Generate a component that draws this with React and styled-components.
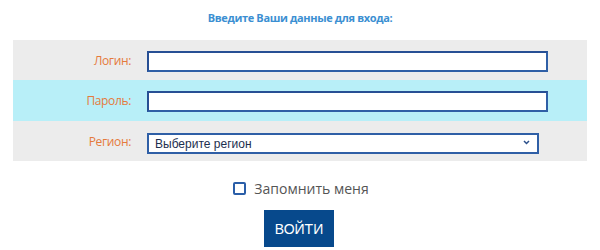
import React from 'react';
import styled, { createGlobalStyle } from 'styled-components';

const Global = createGlobalStyle`
  html, body { margin: 0; padding: 0; background: #fff; }
  body { font-family: "Open Sans", "Noto Sans", sans-serif; }
`;

const Page = styled.div`
  width: 600px;
  height: 250px;
  display: flex;
  flex-direction: column;
  align-items: center;
  overflow: hidden;
`;

const Title = styled.div`
  margin-top: 10px;
  height: 30px;
  font-family: "Open Sans", sans-serif;
  font-weight: bold;
  font-size: 11px;
  color: #3b8fd2;
  letter-spacing: -0.35px;
`;

const Table = styled.div`
  width: 574px;
  display: flex;
  flex-direction: column;
`;

const Row = styled.div`
  display: grid;
  grid-template-columns: 134px 1fr;
  align-items: center;
  height: ${(p) => p.h}px;
  background: ${(p) => (p.alt ? '#b8eff8' : '#ececec')};
`;

const Label = styled.label`
  text-align: right;
  padding-right: 16px;
  font-family: "Open Sans", sans-serif;
  font-size: 12px;
  color: #e57a3c;
  letter-spacing: -0.35px;
`;

const Input = styled.input`
  box-sizing: border-box;
  width: 401px;
  height: 21px;
  border: 2px solid #2f5fa6;
  border-top-color: #274f94;
  border-left-color: #274f94;
  background: #fff;
  outline: none;
  padding: 0 4px;
`;

const SelectWrap = styled.div`
  position: relative;
  width: 392px;
  height: 21px;
`;

const Select = styled.select`
  box-sizing: border-box;
  width: 100%;
  height: 100%;
  border: 2px solid #2f5fa6;
  background: #fff;
  appearance: none;
  padding: 0 6px;
  font-family: "Liberation Sans", Arial, sans-serif;
  font-size: 12px;
  color: #1d2f4f;
  outline: none;
`;

const Chevron = styled.svg`
  position: absolute;
  right: 9px;
  top: 9px;
  pointer-events: none;
`;

const Remember = styled.label`
  margin-top: 18px;
  display: flex;
  align-items: center;
  gap: 8px;
  font-family: "Open Sans", sans-serif;
  font-size: 14px;
  color: #555;
  padding-left: 2px;
`;

const Box = styled.span`
  box-sizing: border-box;
  width: 13px;
  height: 13px;
  border: 2px solid #2a5ea8;
  border-radius: 2px;
  background: #fff;
`;

const Button = styled.button`
  margin-top: 12px;
  width: 70px;
  height: 37px;
  border: none;
  background: #07498c;
  color: #fff;
  font-family: "Liberation Sans", Arial, sans-serif;
  font-size: 14px;
  padding: 0;
  margin-left: -2px;
`;

export default function App() {
  return (
    <>
      <Global />
      <Page>
        <Title>Введите Ваши данные для входа:</Title>
        <Table>
          <Row h={40}>
            <Label>Логин:</Label>
            <div><Input type="text" /></div>
          </Row>
          <Row h={41} alt>
            <Label>Пароль:</Label>
            <div><Input type="password" /></div>
          </Row>
          <Row h={40}>
            <Label>Регион:</Label>
            <SelectWrap>
              <Select defaultValue="">
                <option value="">Выберите регион</option>
              </Select>
              <Chevron width="7" height="5" viewBox="0 0 7 5">
                <path d="M1 1 L3.5 3.5 L6 1" fill="none" stroke="#2a4f8a" strokeWidth="1.5" />
              </Chevron>
            </SelectWrap>
          </Row>
        </Table>
        <Remember>
          <Box />
          Запомнить меня
        </Remember>
        <Button>ВОЙТИ</Button>
      </Page>
    </>
  );
}
